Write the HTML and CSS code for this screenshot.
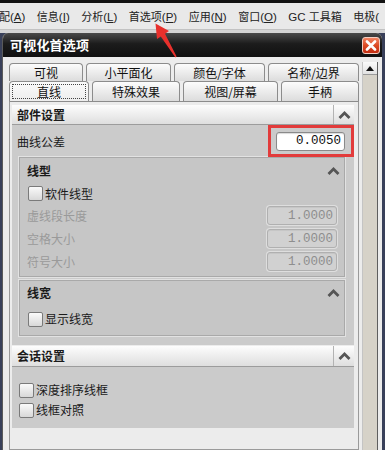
FILE: index.html
```html
<!DOCTYPE html>
<html lang="zh-CN">
<head>
<meta charset="utf-8">
<title>可视化首选项</title>
<link rel="stylesheet" href="styles.css">
</head>
<body>
<div class="topstrip"></div>
<div class="menubar">
  <span class="menu-item">配<span class="key">(<u>A</u>)</span></span>
  <span class="menu-item">信息<span class="key">(<u>I</u>)</span></span>
  <span class="menu-item">分析<span class="key">(<u>L</u>)</span></span>
  <span class="menu-item">首选项<span class="key">(<u>P</u>)</span></span>
  <span class="menu-item">应用<span class="key">(<u>N</u>)</span></span>
  <span class="menu-item">窗口<span class="key">(<u>O</u>)</span></span>
  <span class="menu-item"><span class="key">GC </span>工具箱</span>
  <span class="menu-item">电极<span class="key">(</span></span>
</div>
<div class="desk">
  <div class="dialog">
    <div class="titlebar">
      <span class="title">可视化首选项</span>
      <span class="close"><svg width="12" height="11" viewBox="0 0 12 11"><path d="M2 1.5L10 9.5M10 1.5L2 9.5" stroke="#fff" stroke-width="2.6" stroke-linecap="round"/></svg></span>
    </div>
    <div class="dbody">
      <div class="main">
        <div class="tabrow row1">
          <div class="tab t1">可视</div>
          <div class="tab t2">小平面化</div>
          <div class="tab t3">颜色/字体</div>
          <div class="tab t4">名称/边界</div>
        </div>
        <div class="tabrow row2">
          <div class="tab sel t5"><span class="focus">直线</span></div>
          <div class="tab t6">特殊效果</div>
          <div class="tab t7">视图/屏幕</div>
          <div class="tab t8">手柄</div>
        </div>
        <div class="panel">
          <div class="section">
            <div class="sec-head">
              <span class="sec-title">部件设置</span>
              <span class="sec-chev"><svg width="13" height="8" viewBox="0 0 13 8"><polyline points="1.5,7 6.5,2 11.5,7" fill="none" stroke="#555" stroke-width="2.8"/></svg></span>
            </div>
            <div class="sec-body body1">
              <div class="tol-row">
                <span>曲线公差</span>
                <span class="marked"><span class="field">0.0050</span></span>
              </div>
              <div class="group g1">
                <div class="grp-head">
                  <span>线型</span>
                  <svg width="13" height="8" viewBox="0 0 13 8"><polyline points="1.5,7 6.5,2 11.5,7" fill="none" stroke="#555" stroke-width="2.8"/></svg>
                </div>
                <div class="cb-row r21"><span class="cb"></span><span>软件线型</span></div>
                <div class="in-row"><span class="dim">虚线段长度</span><span class="field off">1.0000</span></div>
                <div class="in-row"><span class="dim">空格大小</span><span class="field off">1.0000</span></div>
                <div class="in-row"><span class="dim">符号大小</span><span class="field off">1.0000</span></div>
              </div>
              <div class="group g2">
                <div class="grp-head h24">
                  <span>线宽</span>
                  <svg width="13" height="8" viewBox="0 0 13 8"><polyline points="1.5,7 6.5,2 11.5,7" fill="none" stroke="#555" stroke-width="2.8"/></svg>
                </div>
                <div class="cb-row r28"><span class="cb"></span><span>显示线宽</span></div>
              </div>
            </div>
          </div>
          <div class="section sec2">
            <div class="sec-head">
              <span class="sec-title">会话设置</span>
              <span class="sec-chev"><svg width="13" height="8" viewBox="0 0 13 8"><polyline points="1.5,7 6.5,2 11.5,7" fill="none" stroke="#555" stroke-width="2.8"/></svg></span>
            </div>
            <div class="sec-body body2">
              <div class="cb-row r20"><span class="cb"></span><span>深度排序线框</span></div>
              <div class="cb-row r20"><span class="cb"></span><span>线框对照</span></div>
            </div>
          </div>
        </div>
      </div>
      <div class="scrollbar">
        <div class="sb-up"><svg width="8" height="5" viewBox="0 0 8 5"><polygon points="0,5 4,0 8,5" fill="#111"/></svg></div>
        <div class="sb-track"></div>
      </div>
    </div>
  </div>
</div>
<svg class="arrow" width="385" height="60" viewBox="0 0 385 60">
  <polygon points="155.5,23.5 169,31 165,33.8 176.6,56.6 175.4,57.4 160.8,36.4 157,39" fill="#e8302c"/>
</svg>
</body>
</html>
```
FILE: styles.css
```css
* { box-sizing: border-box; margin: 0; padding: 0; }
body {
  width: 385px; height: 450px; overflow: hidden; position: relative;
  font-family: "Noto Sans CJK SC", "Noto Sans", sans-serif;
  font-size: 12px; color: #1a1a1a; background: #39405a;
}
.topstrip { height: 3px; background: #121212; }
.menubar {
  height: 27px; background: #e9e9e9; border-bottom: 1px solid #c2c2c2;
  display: flex; align-items: center; gap: 11.5px; margin-left: -1px;
  white-space: nowrap; overflow: hidden; color: #222; font-size: 11px;
}
.menu-item { line-height: 16px; }
.key { font-family: "Liberation Sans", sans-serif; font-size: 11.5px; }
.menu-item u { text-underline-offset: 1px; }
.desk {
  height: 420px;
  padding: 3px 3px 0 2px;
  background: linear-gradient(#d4d4d4 0 3px, #39405a 3px);
}
.dialog {
  width: 380px; height: 417px; background: #ececec;
  border-radius: 6px 6px 0 0; overflow: hidden;
  display: flex; flex-direction: column;
  border-left: 1px solid #5a5a5a;
}
.titlebar {
  height: 24px; flex: none; display: flex; align-items: center; justify-content: space-between;
  padding: 0 2px 0 7px;
  background: linear-gradient(#4a4a4a, #1c1c1c 45%, #101010);
  color: #fff; font-weight: bold; font-size: 13px;
}
.title { line-height: 16px; letter-spacing: 0.2px; }
.close {
  width: 18px; height: 17px; border: 1px solid #f3cfc2; border-radius: 3px;
  background: linear-gradient(#f28463, #dc4a24 50%, #c22d12);
  display: flex; align-items: center; justify-content: center;
}
.dbody { flex: 1; display: flex; gap: 3px; padding: 6px 4px 0 6px; }
.main { width: 350px; display: flex; flex-direction: column; }
.tabrow { display: flex; gap: 3px; }
.row1 { height: 18px; }
.row2 { height: 20px; }
.tab {
  border: 1px solid #8c8c8c; border-bottom: none; border-radius: 4px 4px 0 0;
  background: linear-gradient(#fcfcfc, #dcdcdc);
  display: flex; align-items: center; justify-content: center;
  line-height: 14px; color: #111;
}
.t1 { width: 74px; } .t2 { width: 85px; } .t3 { width: 91px; } .t4 { width: 91px; }
.t5 { width: 80px; } .t6 { width: 88px; } .t7 { width: 95px; } .t8 { width: 78px; }
.tab.sel { background: linear-gradient(#fafafa, #ededed); padding: 2px; }
.focus {
  flex: 1; align-self: stretch; border: 1px dotted #444;
  display: flex; align-items: center; justify-content: center;
}
.panel {
  flex: 1; background: #ececec;
  border: 1px solid #9a9a9a; border-top-color: #8c8c8c;
  padding: 3px 4px 0 2px;
}
.sec-head {
  height: 20px; display: flex; align-items: center;
  background: linear-gradient(#fdfdfd, #dedede);
  border-bottom: 1px solid #9c9c9c;
  font-weight: bold; padding-left: 5px; line-height: 14px;
}
.sec-title { flex: 1; }
.sec-chev {
  width: 21px; align-self: stretch; border-left: 1px solid #b3b3b3;
  display: flex; align-items: center; justify-content: center;
}
.sec-body { background: #cbcbcb; }
.body1 { padding: 0 9px 9px 0; }
.tol-row {
  height: 32px; display: flex; align-items: center; justify-content: space-between;
  padding-left: 5px;
}
.marked { position: relative; display: flex; }
.marked::after {
  content: ""; position: absolute; left: -8px; right: -9px; top: -7px; bottom: -6px;
  border: 3px solid #e23b3b;
}
.field {
  width: 69px; height: 19px; background: #fff;
  border: 1px solid #8a8a8a; border-radius: 3px;
  box-shadow: inset 0 1px 1px rgba(0,0,0,0.15);
  font-family: "Liberation Mono", monospace; font-size: 12.5px; color: #111;
  display: flex; align-items: center; justify-content: flex-end; padding-right: 3px;
}
.field.off {
  width: 70px; background: #d1d1d1; color: #8e8e8e;
  border-color: #b0b0b0; box-shadow: 0 0 0 1px #dedede, inset 0 1px 0 #c6c6c6;
}
.group {
  margin-left: 7px; background: #c6c6c6;
  border: 1px solid #a9a9a9; box-shadow: 0 0 0 1px #e2e2e2;
}
.g1 { padding-bottom: 3px; }
.g2 { margin-top: 3px; padding-bottom: 2px; }
.grp-head {
  height: 25px; display: flex; align-items: center; justify-content: space-between;
  padding: 0 4px 0 7px; font-weight: bold; line-height: 14px;
}
.grp-head.h24 { height: 24px; }
.cb-row { display: flex; align-items: center; gap: 2px; padding-left: 8px; line-height: 14px; }
.r21 { height: 21px; }
.r28 { height: 28px; }
.r20 { height: 20px; padding-left: 7px; }
.cb {
  width: 15px; height: 15px; border: 1px solid #7a7a7a; border-radius: 2px;
  background: linear-gradient(#fafafa, #d8d8d8);
}
.in-row {
  height: 23px; display: flex; align-items: center; justify-content: space-between;
  padding: 0 7px;
}
.dim { color: #9a9a9a; line-height: 14px; }
.sec2 .sec-head { margin-top: 1px; height: 21px; }
.body2 { padding: 13px 0 8px 0; }
.scrollbar {
  width: 16px; margin-top: -1px; display: flex; flex-direction: column;
  border-left: 1px solid #c4c4c4; border-right: 1px solid #5e5e5e;
}
.sb-up {
  height: 13px; background: linear-gradient(#fafafa, #e2e2e2);
  border-bottom: 1px solid #9a9a9a;
  display: flex; align-items: center; justify-content: center;
}
.sb-track { flex: 1; background: #d6d2c8; }
.arrow { position: absolute; left: 0; top: 0; pointer-events: none; }
```
